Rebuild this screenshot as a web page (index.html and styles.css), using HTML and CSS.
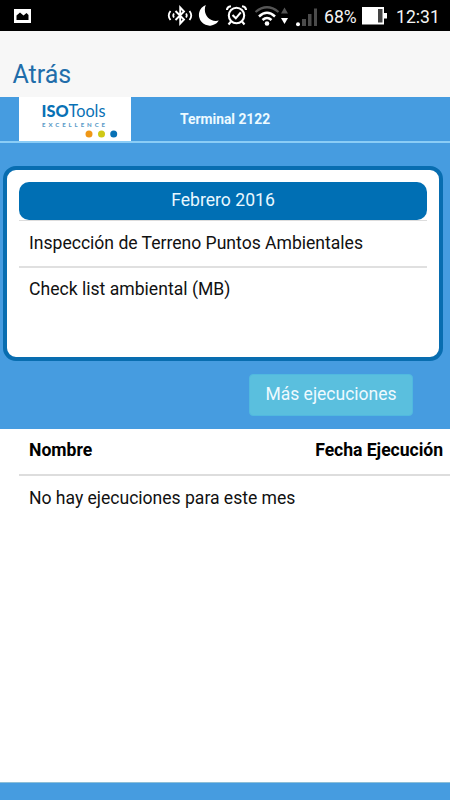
FILE: index.html
```
<!DOCTYPE html>
<html lang="es">
<head>
<meta charset="utf-8">
<title>ISOTools</title>
<link rel="stylesheet" href="styles.css">
</head>
<body>
<div class="status">
  <svg class="status-photo" width="18" height="15" viewBox="0 0 18 15"><path fill="#fff" fill-rule="evenodd" d="M0 0h17v14h-17zM2.500 11h12v-5l-2-2-3 2.500-3.500-3-3.500 3z"/></svg>
  <svg class="status-icons" width="152" height="31" viewBox="166 0 152 31" fill="none" stroke="#fff">
    <path stroke-width="1.900" d="M175.500 11l8.500 8.500-3.800 4v-16l3.800 4-8.500 8.500"/>
    <path stroke-width="1.800" d="M170.500 11q-3.500 4.500 0 9M174 13.500q-1.500 2 0 4M189.500 11q3.500 4.500 0 9M186 13.500q1.500 2 0 4"/>
    <path fill="#fff" stroke="none" d="M205.800 5A10.700 10.700 0 1 0 218.800 20.500C210 23 202 14 205.800 5z"/>
    <circle cx="236.500" cy="15.500" r="7.700" stroke-width="2.100"/>
    <path stroke-width="2.100" d="M227 10q0-3 4-3.700M246 10q0-3-4-3.700M231 21.500l-2.500 3M242 21.500l2.500 3M232.500 15l3.300 3.300 5-6"/>
    <path stroke="#555" stroke-width="2.200" d="M255.500 12q11.500-9.500 23 0"/>
    <path stroke-width="2.500" d="M259 16.500q8-7.500 16 0M262.500 20q4.500-4 9 0"/>
    <circle cx="267" cy="23.500" r="2.300" fill="#fff" stroke="none"/>
    <path fill="#555" stroke="none" d="M281 13.500l3.500-6 3.500 6z"/>
    <path fill="#fff" stroke="none" d="M281 18h7l-3.500 6z"/>
    <circle cx="298" cy="24.300" r="2" fill="#fff" stroke="none"/>
    <path fill="#4b4b4b" stroke="none" d="M302 19h4v7h-4zM308 14h3.500v12h-3.500zM314 8.500h3v17.500h-3z"/>
  </svg>
  <span class="status-percent">68%</span>
  <svg class="status-battery" width="26" height="18" viewBox="0 0 26 18"><path fill="#fff" d="M0 0h22v6h3v5.500h-3v6h-22z"/><path fill="#444" d="M16 2h4.500v13.500h-4.500z"/></svg>
  <span class="status-time">12:31</span>
</div>
<header class="nav"><a class="back">Atrás</a></header>
<section class="brand">
  <svg class="logo" width="112" height="44" viewBox="19 97 112 44">
    <path fill="#fff" d="M19 97h112v44h-112z"/>
    <text class="logo-name" x="41.500" y="117" textLength="64" lengthAdjust="spacingAndGlyphs"><tspan class="logo-iso">ISO</tspan>Tools</text>
    <text class="logo-sub" x="42" y="126.800" textLength="63">EXCELLENCE</text>
    <circle cx="89" cy="134" r="3.500" fill="#ef9716"/>
    <circle cx="101.500" cy="134" r="3.500" fill="#cfc816"/>
    <circle cx="113.700" cy="134" r="3.500" fill="#0871b5"/>
  </svg>
  <span class="terminal">Terminal 2122</span>
</section>
<main class="panel">
  <div class="card">
    <h2 class="month"><span>Febrero 2016</span></h2>
    <div class="row"><span class="row-a">Inspección de Terreno Puntos Ambientales</span></div>
    <div class="row row-last"><span class="row-b">Check list ambiental (MB)</span></div>
  </div>
  <button class="more"><span>Más ejecuciones</span></button>
</main>
<section class="results">
  <div class="results-head"><span class="name">Nombre</span><span class="date">Fecha Ejecución</span></div>
  <p class="empty"><span>No hay ejecuciones para este mes</span></p>
</section>
<footer class="footer"></footer>
</body>
</html>
```
FILE: styles.css
```
* { box-sizing: border-box; }
body {
  margin: 0;
  width: 450px;
  height: 800px;
  display: flex;
  flex-direction: column;
  overflow: hidden;
  background: #fff;
  color: #111;
  font: 17.600px/26px Roboto, sans-serif;
  white-space: nowrap;
}
svg { display: block; flex: none; }
.status {
  height: 31px;
  flex: none;
  display: flex;
  align-items: flex-start;
  background: #000;
  color: #f4f4f4;
}
.status-photo { margin: 9px 0 0 14px; }
.status-icons { margin-left: 134px; }
.status-percent { width: 38px; margin: 4px 0 0 6px; }
.status-battery { margin-top: 7px; }
.status-time { margin: 4px 0 0 8px; }
.nav {
  height: 66px;
  flex: none;
  padding: 28px 12.500px 0;
  background: #f7f7f7;
}
.back { color: #216daa; font-size: 25px; line-height: 32px; }
.brand {
  height: 46px;
  flex: none;
  display: flex;
  padding-left: 19px;
  background: #469ce0;
  border-bottom: 2px solid #8bcdf6;
  box-shadow: 0 1px #469ce0;
}
.logo-name { font: 17px Lato, sans-serif; fill: #0871b5; }
.logo-iso { font-weight: 900; }
.logo-sub { font: 900 6px Lato, sans-serif; fill: #5b9bc8; }
.terminal { margin: 9px 0 0 49px; color: #edfaff; font-size: 13.850px; font-weight: 700; }
.panel {
  height: 286px;
  flex: none;
  padding: 23px 7px 0 3px;
  background: #469ce0;
}
.card {
  height: 195px;
  padding: 12px 12px 0;
  border: 4px solid #086db0;
  border-radius: 13px;
  background: #fff;
}
.month {
  height: 38px;
  margin: 0;
  padding-top: 5px;
  border-radius: 10px;
  background: #006fb4;
  color: #e9f8ff;
  font-size: 17.600px;
  font-weight: 400;
  text-align: center;
}
.row {
  height: 48px;
  padding: 9px 10px 0;
  border-top: 1px solid #ddd;
  border-bottom: 2px solid #e0e0e0;
}
.row-a { letter-spacing: -0.020px; }
.row-b { letter-spacing: 0; }
.row-last { padding-top: 8px; border: 0; }
.more {
  display: block;
  width: 164px;
  height: 42px;
  margin: 13px 0 0 246px;
  padding: 0 0 3px;
  border: 1px solid #50b9df;
  border-radius: 4px;
  background: #5abfde;
  color: #eefaff;
  font: 17.500px/26px Roboto, sans-serif;
}
.results { flex: 1; padding-left: 19px; }
.results-head {
  height: 47px;
  display: flex;
  justify-content: space-between;
  padding: 8px 7px 0 10px;
  border-bottom: 2px solid #ddd;
  color: #000;
  font-weight: 700;
}
.date { letter-spacing: -0.040px; }
.empty { margin: 9px 10px; letter-spacing: -0.030px; }
.footer { height: 18px; flex: none; background: #469ce0; border-top: 1px solid #8dbfd8; }
```
